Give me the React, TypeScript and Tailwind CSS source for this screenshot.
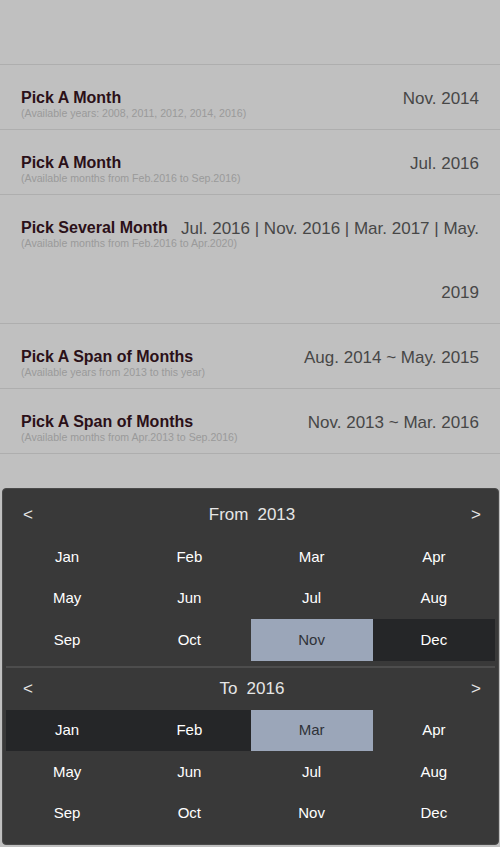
import React from "react";

const MONTHS = ["Jan", "Feb", "Mar", "Apr", "May", "Jun", "Jul", "Aug", "Sep", "Oct", "Nov", "Dec"];

const ROWS = [
  { title: "Pick A Month", sub: "(Available years: 2008, 2011, 2012, 2014, 2016)", value: "Nov. 2014" },
  { title: "Pick A Month", sub: "(Available months from Feb.2016 to Sep.2016)", value: "Jul. 2016" },
  {
    title: "Pick Several Month",
    sub: "(Available months from Feb.2016 to Apr.2020)",
    value: "Jul. 2016 | Nov. 2016 | Mar. 2017 | May. 2019",
  },
  { title: "Pick A Span of Months", sub: "(Available years from 2013 to this year)", value: "Aug. 2014 ~ May. 2015" },
  { title: "Pick A Span of Months", sub: "(Available months from Apr.2013 to Sep.2016)", value: "Nov. 2013 ~ Mar. 2016" },
];

function Section({
  label,
  year,
  selected,
  range,
}: {
  label: string;
  year: string;
  selected: number;
  range: number[];
}) {
  return (
    <div>
      <div className="flex h-[42px] items-center justify-between pl-[20px] pr-[17px] text-[17px] text-[#e6e6e6]">
        <span>&lt;</span>
        <span className="flex gap-[9px]">
          <span>{label}</span>
          <span>{year}</span>
        </span>
        <span>&gt;</span>
      </div>
      <div className="mx-[3px] grid grid-cols-4">
        {MONTHS.map((m, i) => (
          <div
            key={m}
            className={`flex h-[41.5px] items-center justify-center text-[15px] ${
              i === selected
                ? "bg-[#9ba6b9] text-[#2f3238]"
                : range.includes(i)
                ? "bg-[#252628] text-white"
                : "text-white"
            }`}
          >
            {m}
          </div>
        ))}
      </div>
    </div>
  );
}

export default function App() {
  return (
    <div className="min-h-[847px] bg-[#c0c0c0] font-['Liberation_Sans',Arial,sans-serif]">
      <div className="h-[65px] border-b border-[#aeaeae]" />
      {ROWS.map((r, i) => (
        <div key={i} className="flex border-b border-[#aeaeae] px-[21px]">
          <div className="shrink-0 pt-[24px]">
            <div className="text-[16px] leading-[18px] font-bold text-[#2b1018]">{r.title}</div>
            <div className="w-0 whitespace-nowrap text-[10.6px] leading-[13px] text-[#9a9a9a]">{r.sub}</div>
          </div>
          <div className="-mb-[2px] ml-2 flex-1 pt-[2px] text-right text-[17px] leading-[64px] text-[#474747]">
            {r.value}
          </div>
        </div>
      ))}

      <div className="mt-[34px] mr-[1px] ml-[2px] rounded border border-[#4a4a4a] bg-[#393939] pt-[5px] pb-[10px]">
        <Section label="From" year="2013" selected={10} range={[11]} />
        <div className="mx-[3px] mt-[5px] h-[2px] bg-[#4d4d4d]" />
        <Section label="To" year="2016" selected={2} range={[0, 1]} />
      </div>
    </div>
  );
}
